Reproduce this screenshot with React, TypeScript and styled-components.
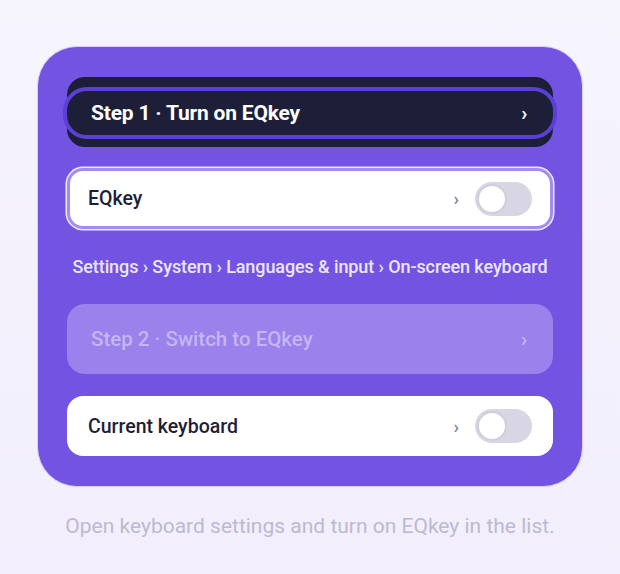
import styled, { createGlobalStyle } from "styled-components";

const GlobalStyle = createGlobalStyle`
  html, body {
    margin: 0;
    padding: 0;
    background: #f3f0fd;
    font-family: Roboto, "Noto Sans", "Liberation Sans", sans-serif;
  }
`;

const Page = styled.div`
  width: 620px;
  height: 574px;
  box-sizing: border-box;
  padding-top: 46px;
  display: flex;
  flex-direction: column;
  align-items: center;
  background: linear-gradient(180deg, #f6f4fd 0%, #f2eefd 100%);
`;

const Card = styled.div`
  width: 546px;
  box-sizing: border-box;
  padding: 30px 29px 30px 29px;
  background: #7353e1;
  border: 1.5px solid #d9cff8;
  border-radius: 40px;
  display: flex;
  flex-direction: column;
`;

const StepButton = styled.div`
  height: 70px;
  box-sizing: border-box;
  padding: 10px 0 8px;
  background: #1d1e38;
  border-radius: 18px;
  display: flex;
`;

const StepInner = styled.div`
  flex: 1;
  margin: 0 -4px;
  border: 4px solid #5a40d6;
  border-radius: 24px;
  background: #1d1e38;
  display: flex;
  align-items: center;
  justify-content: space-between;
  padding: 0 26px 0 24px;
  color: #ffffff;
  font-size: 21px;
  font-weight: 700;
  letter-spacing: -0.2px;
`;

const StepMuted = styled.div`
  height: 70px;
  border-radius: 18px;
  background: #9a81eb;
  display: flex;
  align-items: center;
  justify-content: space-between;
  padding: 0 26px 0 24px;
  color: #c4b6f4;
  font-size: 20.5px;
  font-weight: 500;
`;

const Chevron = styled.span<{ $tone: string }>`
  font-size: 20px;
  font-weight: 700;
  color: ${(p) => p.$tone};
`;

const Row = styled.div<{ $ring?: boolean; $gap: number }>`
  margin-top: ${(p) => p.$gap}px;
  height: ${(p) => (p.$ring ? 61 : 60)}px;
  box-sizing: border-box;
  background: #ffffff;
  border-radius: 16px;
  border: ${(p) => (p.$ring ? "3px solid #a38cf0" : "none")};
  box-shadow: ${(p) => (p.$ring ? "0 0 0 1.5px #ece6ff" : "none")};
  display: flex;
  align-items: center;
  padding: 0 ${(p) => (p.$ring ? 18 : 21)}px 0 ${(p) => (p.$ring ? 18 : 21)}px;
  color: #1d1e38;
  font-size: 19.5px;
  font-weight: 500;
`;

const RowLabel = styled.span`
  flex: 1;
`;

const SmallChevron = styled.span`
  color: #8a889a;
  font-size: 18px;
  font-weight: 700;
  margin-right: 16px;
`;

const Toggle = styled.div`
  width: 57px;
  height: 34px;
  box-sizing: border-box;
  border-radius: 17px;
  background: #d8d6e4;
  padding: 2px;
  display: flex;
  align-items: center;
`;

const Knob = styled.div`
  width: 30px;
  height: 30px;
  box-sizing: border-box;
  border-radius: 50%;
  background: #ffffff;
  border: 2px solid #d0cedc;
`;

const Breadcrumb = styled.div`
  height: 75px;
  display: flex;
  align-items: center;
  justify-content: center;
  color: #ebe6ff;
  font-size: 18px;
  font-weight: 500;
  letter-spacing: -0.1px;
`;

const Hint = styled.p`
  margin: 27px 0 0;
  color: #bdb9d0;
  font-size: 21px;
  font-weight: 400;
  text-align: center;
`;

export default function App() {
  return (
    <>
      <GlobalStyle />
      <Page>
        <Card>
          <StepButton>
            <StepInner>
              <span>Step 1 · Turn on EQkey</span>
              <Chevron $tone="#ffffff">›</Chevron>
            </StepInner>
          </StepButton>
          <Row $ring $gap={21}>
            <RowLabel>EQkey</RowLabel>
            <SmallChevron>›</SmallChevron>
            <Toggle>
              <Knob />
            </Toggle>
          </Row>
          <Breadcrumb>
            Settings › System › Languages &amp; input › On-screen keyboard
          </Breadcrumb>
          <StepMuted>
            <span>Step 2 · Switch to EQkey</span>
            <Chevron $tone="#c4b6f4">›</Chevron>
          </StepMuted>
          <Row $gap={22}>
            <RowLabel>Current keyboard</RowLabel>
            <SmallChevron>›</SmallChevron>
            <Toggle>
              <Knob />
            </Toggle>
          </Row>
        </Card>
        <Hint>Open keyboard settings and turn on EQkey in the list.</Hint>
      </Page>
    </>
  );
}
